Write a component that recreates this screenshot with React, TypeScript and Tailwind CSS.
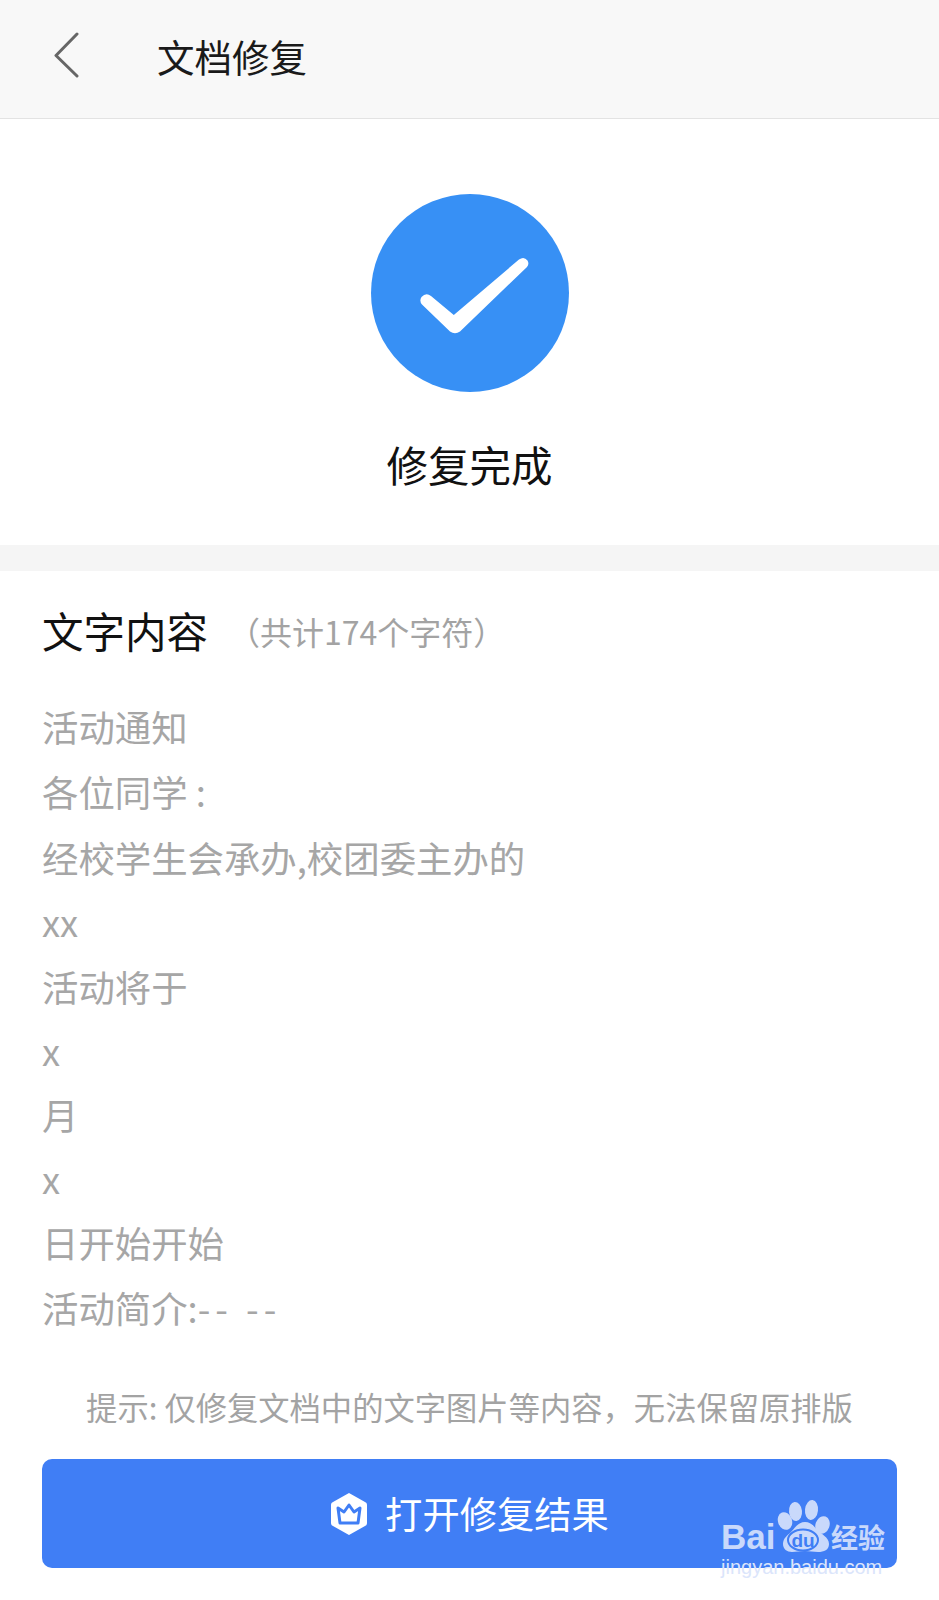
const FONT = "font-['Noto_Sans_CJK_SC','Noto_Sans',sans-serif]";

const lines: [React.ReactNode, string][] = [
  ["活动通知", "h-[66px]"],
  ["各位同学 :", "h-[65px]"],
  ["经校学生会承办,校团委主办的", "h-[66px]"],
  ["xx", "h-[63px]"],
  ["活动将于", "h-[66px]"],
  ["x", "h-[63px]"],
  ["月", "h-[65px]"],
  ["x", "h-[63px]"],
  ["日开始开始", "h-[65px]"],
  [<>活动简介:<span className="tracking-[5px]">-- --</span></>, "h-[65px]"],
];

function Paw() {
  return (
    <svg viewBox="0 0 58 60" width="58" height="60" fill="#c9d9fb" className="shrink-0">
      <ellipse cx="10" cy="26" rx="7" ry="9" transform="rotate(-20 10 26)" />
      <ellipse cx="20.500" cy="16.500" rx="6.500" ry="9.500" transform="rotate(-6 20.500 16.500)" />
      <ellipse cx="36.500" cy="15" rx="6.500" ry="10" transform="rotate(6 36.500 15)" />
      <ellipse cx="47.500" cy="30" rx="7" ry="9" transform="rotate(20 47.500 30)" />
      <path d="M30 27c6 0 9 4 12 8 4 4 12 7 12 14 0 6-5 8-11 8-5 0-8-1-13-1s-9 1-13 1c-5 0-9-3-9-8 0-6 5-9 8-12 4-4 7-10 14-10z" />
      <ellipse cx="28" cy="45" rx="15" ry="10.500" fill="none" stroke="#407ef5" strokeWidth="2" />
      <text x="28" y="52" textAnchor="middle" fontFamily="Liberation Sans" fontWeight="700" fontSize="19" fill="#407ef5">du</text>
    </svg>
  );
}

export default function App() {
  return (
    <div className={`${FONT} relative h-[1600px] w-[939px] overflow-hidden bg-white`}>
      <header className="flex h-[119px] items-center border-b border-[#e3e3e3] bg-[#f8f8f8] pl-[53px]">
        <svg width="26" height="48" viewBox="0 0 26 48" fill="none" className="mb-[8px]">
          <path d="M24 3 3 24.500 24 45" stroke="#666666" strokeWidth="3" strokeLinecap="round" strokeLinejoin="round" />
        </svg>
        <h1 className="mb-[7px] ml-[78px] text-[37.500px] leading-none text-[#1a1a1a]">文档修复</h1>
      </header>

      <section className="flex h-[426px] flex-col items-center pt-[75px]">
        <div className="flex h-[198px] w-[198px] items-center justify-center rounded-full bg-[#3790f5]">
          <svg width="198" height="198" viewBox="0 0 198 198" fill="#ffffff">
            <path d="M50.500 103Q55 98 60 102L82.800 121 148 65.500Q153 62 156.500 66.500 158.500 70 156 73L89 137.500Q84 141 79 137.500L51 110.500Q48 107 50.500 103z" />
          </svg>
        </div>
        <p className="mt-[42px] text-[41.500px] leading-[60px] text-[#111111]">修复完成</p>
      </section>

      <div className="h-[26px] bg-[#f5f5f5]" />

      <section className="px-[42px]">
        <div className="flex h-[122px] items-center pb-[3px]">
          <h2 className="text-[41.500px] leading-none text-[#111111]">文字内容</h2>
          <span className="ml-[20px] text-[32px] leading-none text-[#a3a3a3]">（共计174个字符）</span>
        </div>
        <div className="text-[36.400px] text-[#a6a6a6]">
          {lines.map(([t, h], i) => (
            <div key={i} className={`${h} flex items-center whitespace-pre leading-none`}>{t}</div>
          ))}
        </div>
      </section>

      <p className="mt-[43px] text-center text-[31.300px] leading-[48px] text-[#a3a3a3]">
        提示: 仅修复文档中的文字图片等内容，无法保留原排版
      </p>

      <button className="mx-[42px] mt-[28px] flex h-[109px] w-[855px] items-center justify-center rounded-[10px] bg-[#407ef5] text-white">
        <svg width="38" height="44" viewBox="0 0 38 44" className="mr-[17px]">
          <path d="M19 1 35 10a3 3 0 0 1 2 3v18a3 3 0 0 1-2 3L19 43 3 34a3 3 0 0 1-2-3V13a3 3 0 0 1 2-3z" fill="#ffffff" />
          <path d="M8 16l6 4 5-7 5 7 6-4-2 15H10z" fill="none" stroke="#407ef5" strokeWidth="3" strokeLinejoin="round" />
        </svg>
        <span className="text-[37.300px] leading-none">打开修复结果</span>
      </button>

      <div className="pointer-events-none absolute left-[721px] top-[1495px] flex w-[170px] flex-col text-[#c9d9fb]">
        <div className="flex h-[60px] items-end">
          <span className="w-[54px] shrink-0 font-['Liberation_Sans',sans-serif] text-[35px] font-bold leading-[36px]">Bai</span>
          <Paw />
          <span className="ml-[-2px] whitespace-nowrap text-[27px] font-bold leading-[36px]">经验</span>
        </div>
        <span className="font-['Liberation_Sans',sans-serif] text-[20px] leading-[24px] text-[#dbe5fb]">jingyan.baidu.com</span>
      </div>
    </div>
  );
}
